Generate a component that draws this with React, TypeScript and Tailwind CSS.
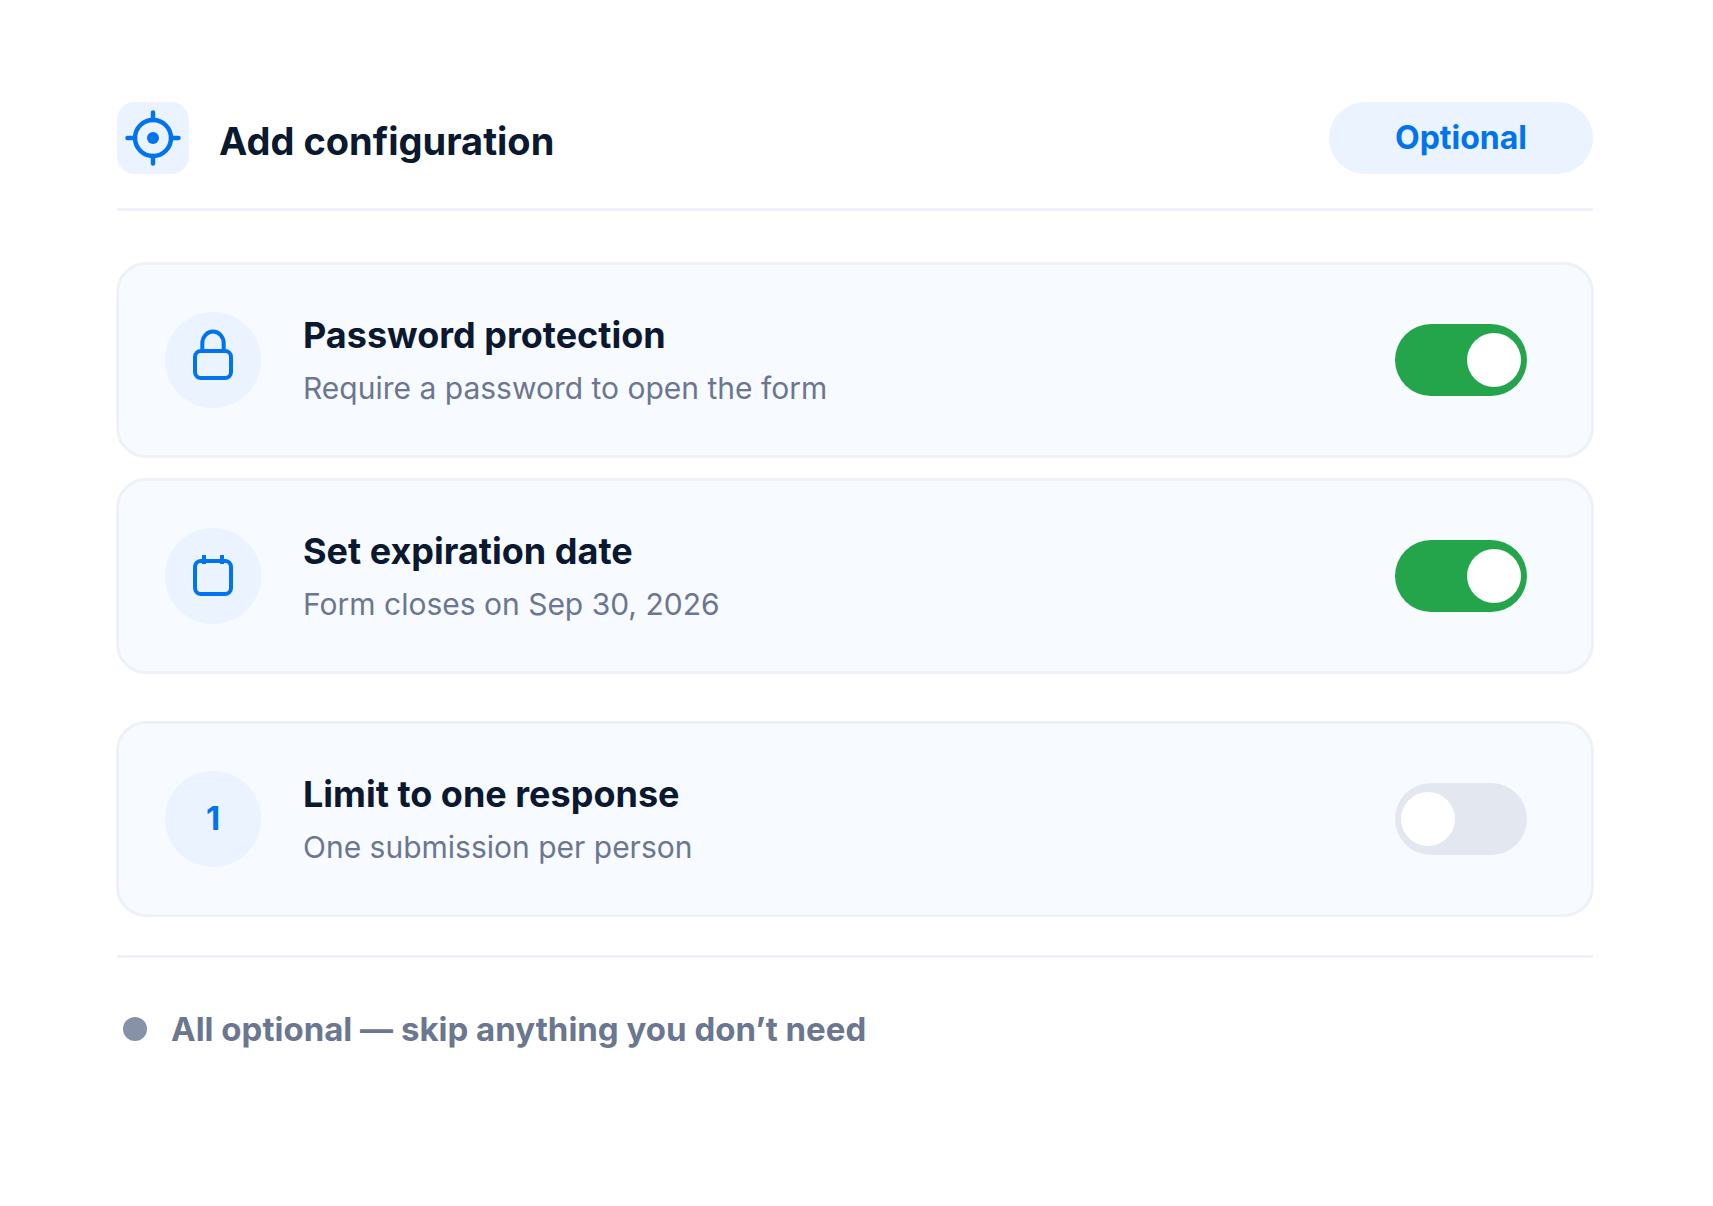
import React, { useState } from "react";

type Setting = {
  id: string;
  title: string;
  description: string;
  icon: React.ReactNode;
};

const TargetIcon = () => (
  <svg
    viewBox="-36 -36 72 72"
    className="size-[72px] shrink-0 rounded-[18px] bg-[#eaf3ff] text-[#0074ee]"
    fill="none"
    stroke="currentColor"
    strokeWidth="4.5"
    strokeLinecap="round"
    aria-hidden="true"
  >
    <circle r="18" />
    <circle r="6" fill="currentColor" stroke="none" />
    <path d="M0 -25.5V-18M0 18V25.5M-25.5 0H-18M18 0H25.5" />
  </svg>
);

const LockIcon = () => (
  <svg viewBox="-48 -48 96 96" fill="none" stroke="currentColor" strokeWidth="4" aria-hidden="true">
    <rect x="-18" y="-9" width="36" height="27" rx="6" />
    <path d="M-10.7 -9V-16.5A10.7 12 0 0 1 10.7 -16.5V-9" />
  </svg>
);

const CalendarIcon = () => (
  <svg viewBox="-48 -48 96 96" fill="none" stroke="currentColor" strokeWidth="4" aria-hidden="true">
    <rect x="-18" y="-15" width="36" height="33" rx="6" />
    <path d="M-9 -21V-12M9 -21V-12" />
  </svg>
);

const accessSettings: Setting[] = [
  {
    id: "password",
    title: "Password protection",
    description: "Require a password to open the form",
    icon: <LockIcon />,
  },
  {
    id: "expiration",
    title: "Set expiration date",
    description: "Form closes on Sep 30, 2026",
    icon: <CalendarIcon />,
  },
];

const responseSettings: Setting[] = [
  {
    id: "limit",
    title: "Limit to one response",
    description: "One submission per person",
    icon: "1",
  },
];

interface SettingRowProps {
  setting: Setting;
  checked: boolean;
  onChange: (checked: boolean) => void;
}

const SettingRow = ({ setting, checked, onChange }: SettingRowProps) => (
  <li className="flex items-center rounded-[30px] border-3 border-[#eef1f7] bg-[#f7faff] py-[47px] pr-16 pl-[46px]">
    <div className="flex size-24 shrink-0 items-center justify-center rounded-full bg-[#eaf3ff] text-[33px] font-bold text-[#0074ee]">
      {setting.icon}
    </div>
    <div className="ml-[42px] flex-1">
      <label htmlFor={setting.id} className="block text-[36px] leading-[42px] font-bold text-[#0a1830]">
        {setting.title}
      </label>
      <p id={`${setting.id}-description`} className="mt-[14px] text-[30px] leading-[36px] text-[#6b7690]">
        {setting.description}
      </p>
    </div>
    <input
      id={setting.id}
      type="checkbox"
      role="switch"
      aria-describedby={`${setting.id}-description`}
      checked={checked}
      onChange={(e) => onChange(e.target.checked)}
      className="flex h-[72px] w-[132px] shrink-0 cursor-pointer appearance-none items-center justify-start rounded-full bg-[#e3e7ef] px-[6px] before:size-[54px] before:rounded-full before:bg-white checked:justify-end checked:bg-[#24a54c]"
    />
  </li>
);

const App = () => {
  const [enabled, setEnabled] = useState<Record<string, boolean>>({
    password: true,
    expiration: true,
    limit: false,
  });

  const renderRow = (setting: Setting) => (
    <SettingRow
      key={setting.id}
      setting={setting}
      checked={enabled[setting.id]}
      onChange={(checked) => setEnabled({ ...enabled, [setting.id]: checked })}
    />
  );

  return (
    <main className="min-h-screen bg-white pt-[102px] pr-[119px] pl-[116px] font-['Inter',sans-serif]">
      <header className="mx-px flex items-end border-b-3 border-[#eef1f7] pb-[34px]">
        <TargetIcon />
        <h1 className="ml-[30px] flex-1 text-[38px] leading-[66px] font-bold text-[#0a1830]">
          Add configuration
        </h1>
        <span className="flex h-[72px] w-[264px] items-center justify-center rounded-full bg-[#eaf3ff] text-[32px] font-bold text-[#0074ee]">
          Optional
        </span>
      </header>

      {/* Access */}
      <ul className="mt-[51px] flex flex-col gap-5">{accessSettings.map(renderRow)}</ul>

      {/* Responses */}
      <ul className="mt-[47px]">{responseSettings.map(renderRow)}</ul>

      <footer className="mx-px mt-[38px] flex items-center border-t-3 border-[#eef1f7] pt-[51px] pl-[6px]">
        <span className="size-6 rounded-full bg-[#8792a8]" />
        <p className="ml-6 text-[33px] leading-[40px] font-bold text-[#6b7690]">
          All optional — skip anything you don’t need
        </p>
      </footer>
    </main>
  );
};

export default App;
